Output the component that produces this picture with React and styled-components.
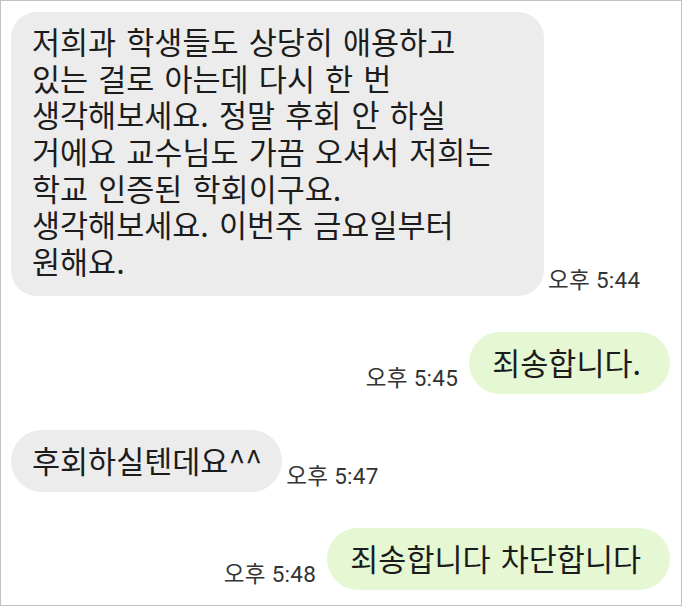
import React from 'react'
import styled, { createGlobalStyle } from 'styled-components'

const GlobalStyle = createGlobalStyle`
  html, body {
    margin: 0;
    padding: 0;
    background: #ffffff;
  }
  * {
    box-sizing: border-box;
  }
`

const Frame = styled.div`
  width: 682px;
  height: 606px;
  border: 1px solid #c2c2c2;
  background: #ffffff;
  padding: 11px 11px 0 10px;
  display: flex;
  flex-direction: column;
  gap: 36px;
  font-family: "Noto Sans CJK KR", "Noto Sans", sans-serif;
`

const Row = styled.div`
  display: flex;
  align-items: flex-end;
  justify-content: ${props => (props.$out ? 'flex-end' : 'flex-start')};
  gap: ${props => (props.$out ? '11px' : '4px')};
`

const Bubble = styled.div`
  width: ${props => props.$width || 'auto'};
  background: ${props => (props.$out ? '#e5f8d3' : '#ececec')};
  color: #1c1c1c;
  font-size: 30.5px;
  line-height: ${props => (props.$multi ? '36.67px' : '36px')};
  padding: ${props =>
    props.$multi ? '11px 22px 16px 21px' : props.$out ? '12px 29px 14px 23px' : '12px 20px 14px 21px'};
  border-radius: ${props => (props.$multi ? '26px' : '31px')};
  word-spacing: 3.3px;
  white-space: nowrap;
`

const Time = styled.span`
  font-family: Roboto, "Noto Sans CJK KR", sans-serif;
  font-size: 22.5px;
  line-height: 22px;
  color: #333333;
  letter-spacing: 0.3px;
  margin-bottom: 5px;
  white-space: nowrap;
`

const firstLines = [
  '저희과 학생들도 상당히 애용하고',
  '있는 걸로 아는데 다시 한 번',
  '생각해보세요. 정말 후회 안 하실',
  '거에요 교수님도 가끔 오셔서 저희는',
  '학교 인증된 학회이구요.',
  '생각해보세요. 이번주 금요일부터',
  '원해요.',
]

const messages = [
  { id: 1, out: false, lines: firstLines, time: '오후 5:44', width: '533px' },
  { id: 2, out: true, lines: ['죄송합니다.'], time: '오후 5:45' },
  { id: 3, out: false, lines: ['후회하실텐데요^^'], time: '오후 5:47' },
  { id: 4, out: true, lines: ['죄송합니다 차단합니다'], time: '오후 5:48' },
]

const Message = ({ msg }) => {
  const bubble = (
    <Bubble $out={msg.out} $multi={msg.lines.length > 1} $width={msg.width}>
      {msg.lines.map((line, i) => (
        <React.Fragment key={i}>
          {i > 0 && <br />}
          {line}
        </React.Fragment>
      ))}
    </Bubble>
  )
  const time = <Time>{msg.time}</Time>

  return (
    <Row $out={msg.out}>
      {msg.out ? time : bubble}
      {msg.out ? bubble : time}
    </Row>
  )
}

const App = () => {
  return (
    <>
      <GlobalStyle />
      <Frame>
        {messages.map(msg => (
          <Message key={msg.id} msg={msg} />
        ))}
      </Frame>
    </>
  )
}

export default App
